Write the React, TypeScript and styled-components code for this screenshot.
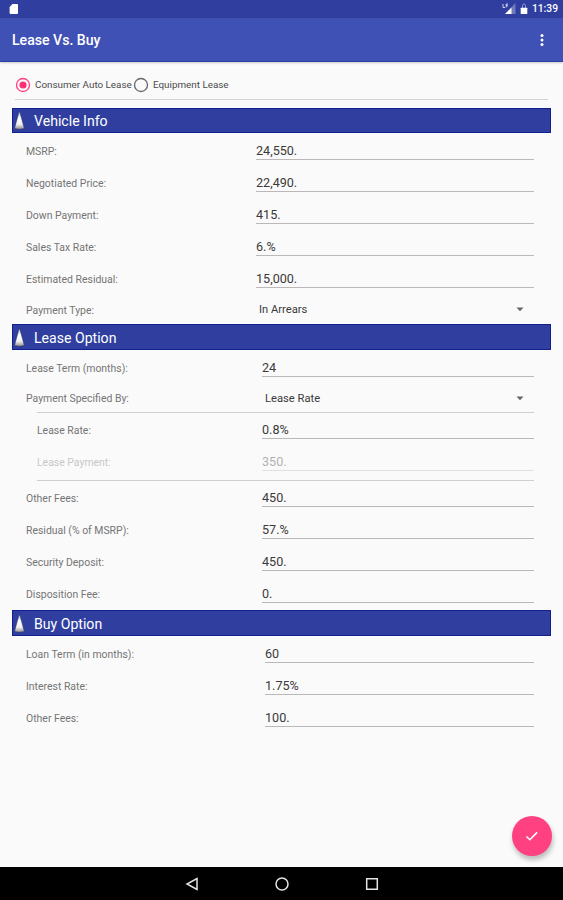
import React from "react";
import styled, { createGlobalStyle } from "styled-components";

const GlobalStyle = createGlobalStyle`
  * { box-sizing: border-box; }
  body { margin: 0; background: #fafafa; font-family: Roboto, "Liberation Sans", sans-serif; }
  svg { flex: none; }
`;

const Screen = styled.div`
  position: relative;
  display: flex;
  flex-direction: column;
  width: 563px;
  height: 900px;
  overflow: hidden;
  background: #fafafa;
`;

const StatusBar = styled.header`
  display: flex;
  align-items: center;
  height: 18px;
  padding: 0 5px 0 9px;
  background: #303f9f;
  color: #fff;
`;

const StatusIcons = styled.div`
  display: flex;
  align-items: center;
  gap: 4px;
  margin-left: auto;
`;

const Clock = styled.span`
  font-size: 10.3px;
  font-weight: 500;
  line-height: 18px;
`;

const AppBar = styled.div`
  display: flex;
  align-items: center;
  justify-content: space-between;
  height: 44px;
  padding: 1px 19px 0 12px;
  background: #3f51b5;
  border-bottom: 1px solid #2c40ae;
  box-shadow: 0 1px 2px rgba(0, 0, 0, 0.2);
`;

const Title = styled.h1`
  margin: 0;
  color: #fff;
  font-size: 14.1px;
  font-weight: 500;
  line-height: 20px;
`;

const Content = styled.main`
  flex: 1;
  padding: 9px 12px 0 12px;
`;

const RadioGroup = styled.div`
  display: flex;
  align-items: center;
  height: 29px;
  margin: 0 3px 8px 3px;
  border-bottom: 1px solid #d2d2d2;
`;

const Option = styled.div<{ $width: number }>`
  display: flex;
  align-items: center;
  gap: 4px;
  width: ${(p) => p.$width}px;
  color: #4a4a4a;
  font-size: 9.85px;
  line-height: 14px;
  white-space: nowrap;
`;

const SectionBar = styled.h2<{ $height: number }>`
  display: flex;
  align-items: center;
  gap: 8px;
  height: ${(p) => p.$height}px;
  margin: 0;
  padding: ${(p) => p.$height - 25}px 0 0 0;
  background: #303f9f;
  border: 1px solid #10208f;
  color: #fff;
  font-size: 14.1px;
  font-weight: 400;
`;

const Rows = styled.div`
  padding: 2px 17px 0 14px;
`;

const Row = styled.div<{ $height?: number; $disabled?: boolean }>`
  display: flex;
  height: ${(p) => p.$height ?? 32}px;
  align-items: center;
  opacity: ${(p) => (p.$disabled ? 0.38 : 1)};
`;

const Label = styled.label`
  flex: 1;
  padding-top: 1px;
  color: #757575;
  font-size: 10.45px;
  line-height: 15px;
  white-space: nowrap;
`;

const Value = styled.div<{ $width: number }>`
  align-self: flex-start;
  width: ${(p) => p.$width}px;
  height: 25px;
  padding-top: 7px;
  border-bottom: 1px solid #b9b9b9;
  color: #3a3a3a;
  font-size: 12.6px;
  line-height: 17px;
`;

const Select = styled.div<{ $width: number }>`
  display: flex;
  align-items: center;
  justify-content: space-between;
  width: ${(p) => p.$width}px;
  padding: 0 10px 0 3px;
  color: #3a3a3a;
  font-size: 11.2px;
`;

const Nested = styled.div`
  margin-left: 11px;
  padding: 1px 0 2px;
  border-top: 1px solid #cfcfcf;
  border-bottom: 1px solid #cfcfcf;
  margin-bottom: 1px;
`;

const Fab = styled.button`
  position: absolute;
  right: 11px;
  bottom: 44px;
  display: flex;
  align-items: center;
  justify-content: center;
  width: 40px;
  height: 40px;
  padding: 0;
  border: 0;
  border-radius: 50%;
  background: #ff4081;
  box-shadow: 1px 4px 5px rgba(0, 0, 0, 0.25);
`;

const NavBar = styled.nav`
  display: flex;
  align-items: center;
  justify-content: center;
  gap: 76px;
  height: 33px;
  background: #000;
`;

const RadioIcon = ({ checked }: { checked?: boolean }) => (
  <svg width="16" height="16" viewBox="0 0 16 16" fill="none">
    <circle cx="8" cy="8" r="6.5" stroke={checked ? "#ff4081" : "#666"} strokeWidth="1.3" />
    {checked && <circle cx="8" cy="8" r="3.6" fill="#ff2f74" />}
  </svg>
);

const Cone = () => (
  <svg width="13" height="22" viewBox="0 0 13 22">
    <defs>
      <linearGradient id="cone" x1="0" y1="0" x2="0" y2="1">
        <stop offset="0" stopColor="#b8bdd8" />
        <stop offset="0.35" stopColor="#fff" />
        <stop offset="0.7" stopColor="#f2f2f2" />
        <stop offset="1" stopColor="#8d8d8d" />
      </linearGradient>
    </defs>
    <path d="M6 2h.8L11.300 18.500q-4.900 1.600-9.800 0Z" fill="url(#cone)" stroke="#27305f" strokeWidth=".5" />
  </svg>
);

const Section = ({ title, height = 26 }: { title: string; height?: number }) => (
  <SectionBar $height={height}>
    <Cone />
    {title}
  </SectionBar>
);

interface FieldProps {
  label: string;
  value: string;
  width: number;
  disabled?: boolean;
}

const Field = ({ label, value, width, disabled }: FieldProps) => (
  <Row $disabled={disabled}>
    <Label>{label}</Label>
    <Value $width={width}>{value}</Value>
  </Row>
);

const Dropdown = ({ label, value, width, height }: FieldProps & { height: number }) => (
  <Row $height={height}>
    <Label>{label}</Label>
    <Select $width={width}>
      {value}
      <svg width="8" height="5" viewBox="0 0 8 5">
        <path d="M.5.5h7L4 4.300Z" fill="#666" />
      </svg>
    </Select>
  </Row>
);

export default function App() {
  return (
    <Screen>
      <GlobalStyle />
      <StatusBar>
        <svg width="10" height="12" viewBox="0 0 10 12">
          <path d="M3.500 1H8q1 0 1 1v8q0 1-1 1H1.600q-1 0-1-1V4Z" fill="#fff" />
        </svg>
        <StatusIcons>
          <svg width="14" height="12" viewBox="0 0 14 12">
            <path d="M13.500 0v11H3Z" fill="#6f7abc" />
            <path d="M9.500 4.500V11H3Z" fill="#fff" />
            <path d="M1 1v3.500h2M4.200 4.500V1H6M4.200 2.700H6" fill="none" stroke="#cdd2ee" strokeWidth="1" />
          </svg>
          <svg width="8" height="12" viewBox="0 0 8 12">
            <path d="M2.500 5V2.500q0-1.500 1.500-1.500t1.500 1.500V5" fill="none" stroke="#8f98cf" strokeWidth="1" />
            <rect x=".7" y="4.800" width="6.600" height="6.200" rx=".5" fill="#fff" />
          </svg>
          <Clock>11:39</Clock>
        </StatusIcons>
      </StatusBar>
      <AppBar>
        <Title>Lease Vs. Buy</Title>
        <svg width="4" height="14" viewBox="0 0 4 14" fill="#fff">
          <circle cx="2" cy="2.500" r="1.500" />
          <circle cx="2" cy="7" r="1.500" />
          <circle cx="2" cy="11.500" r="1.500" />
        </svg>
      </AppBar>
      <Content>
        <RadioGroup>
          <Option $width={118}>
            <RadioIcon checked />
            Consumer Auto Lease
          </Option>
          <Option $width={110}>
            <RadioIcon />
            Equipment Lease
          </Option>
        </RadioGroup>

        <Section title="Vehicle Info" height={25} />
        <Rows>
          <Field label="MSRP:" value="24,550." width={278} />
          <Field label="Negotiated Price:" value="22,490." width={278} />
          <Field label="Down Payment:" value="415." width={278} />
          <Field label="Sales Tax Rate:" value="6.%" width={278} />
          <Field label="Estimated Residual:" value="15,000." width={278} />
          <Dropdown label="Payment Type:" value="In Arrears" width={278} height={29} />
        </Rows>

        <Section title="Lease Option" />
        <Rows>
          <Field label="Lease Term (months):" value="24" width={272} />
          <Dropdown label="Payment Specified By:" value="Lease Rate" width={272} height={28} />
          <Nested>
            <Field label="Lease Rate:" value="0.8%" width={272} />
            <Field label="Lease Payment:" value="350." width={272} disabled />
          </Nested>
          <Field label="Other Fees:" value="450." width={272} />
          <Field label="Residual (% of MSRP):" value="57.%" width={272} />
          <Field label="Security Deposit:" value="450." width={272} />
          <Field label="Disposition Fee:" value="0." width={272} />
        </Rows>

        <Section title="Buy Option" />
        <Rows>
          <Field label="Loan Term (in months):" value="60" width={269} />
          <Field label="Interest Rate:" value="1.75%" width={269} />
          <Field label="Other Fees:" value="100." width={269} />
        </Rows>
      </Content>
      <Fab aria-label="Calculate">
        <svg width="16" height="16" viewBox="0 0 16 16">
          <path d="m2.500 8.500 3.300 3.200 7.300-7.300" fill="none" stroke="#fff" strokeWidth="1.600" />
        </svg>
      </Fab>
      <NavBar>
        <svg width="14" height="14" viewBox="0 0 14 14">
          <path d="M12 1.500v11L2 7Z" fill="none" stroke="#e4e4e4" strokeWidth="1.500" />
        </svg>
        <svg width="14" height="14" viewBox="0 0 14 14">
          <circle cx="7" cy="7" r="6" fill="none" stroke="#e4e4e4" strokeWidth="1.500" />
        </svg>
        <svg width="14" height="14" viewBox="0 0 14 14">
          <path d="M1.700 1.700h10.600v10.600H1.700Z" fill="none" stroke="#e4e4e4" strokeWidth="1.500" />
        </svg>
      </NavBar>
    </Screen>
  );
}
